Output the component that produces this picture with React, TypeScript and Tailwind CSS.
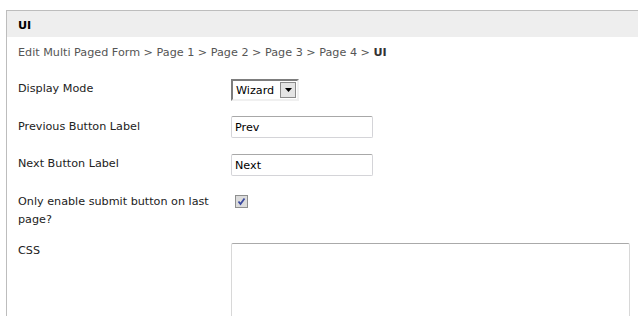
import React from 'react';

const font = { fontFamily: '"DejaVu Sans", Verdana, sans-serif' };

export default function App() {
  return (
    <div className="w-[638px] h-[316px] overflow-hidden bg-white pt-[10px] pl-[6px] text-[11.2px] leading-[18px] text-[#222]" style={font}>
      <div className="w-[640px] h-[400px] border-t border-l border-[#bdbdbd]">
        {/* header */}
        <div className="h-[26px] bg-[#eeeeee] pl-[11px] pt-[3px] flex items-center font-bold text-black">UI</div>

        <div className="pl-[11px]">
          {/* breadcrumb */}
          <div className="mt-[7px] text-[#555]">
            Edit Multi Paged Form &gt; Page 1 &gt; Page 2 &gt; Page 3 &gt; Page 4 &gt; <span className="font-bold text-[#333]">UI</span>
          </div>

          {/* Display Mode */}
          <div className="mt-[17px] flex items-start">
            <div className="w-[213px] pt-[1px]">Display Mode</div>
            <div className="w-[68px] h-[22px] flex items-center justify-between border-2 border-t-[#7d7d7d] border-l-[#7d7d7d] border-r-[#f0f0f0] border-b-[#f0f0f0] bg-white pl-[3px] pr-[1px] text-black">
              <span className="pt-[1px]">Wizard</span>
              <span className="w-[16px] h-[16px] flex items-center justify-center border border-[#8a8a8a] bg-[#e4e4e4]">
                <svg width="7" height="4" viewBox="0 0 7 4"><path d="M0 0h7L3.5 4z" fill="#000" /></svg>
              </span>
            </div>
          </div>

          {/* Previous */}
          <div className="mt-[15px] flex items-start">
            <div className="w-[213px] pt-[2px]">Previous Button Label</div>
            <div className="w-[142px] h-[22px] border border-[#d4d4d8] border-t-[#a8a8a8] rounded-[2px] px-[3px] pt-[1px] flex items-center text-black">Prev</div>
          </div>

          {/* Next */}
          <div className="mt-[16px] flex items-start">
            <div className="w-[213px] pt-[1px]">Next Button Label</div>
            <div className="w-[142px] h-[22px] border border-[#d4d4d8] border-t-[#a8a8a8] rounded-[2px] px-[3px] pt-[1px] flex items-center text-black">Next</div>
          </div>

          {/* Only enable submit */}
          <div className="mt-[16px] flex items-start">
            <div className="w-[213px] pr-[4px] pt-[1px]">Only enable submit button on last page?</div>
            <div className="ml-[4px] mt-[3px] w-[13px] h-[13px] border border-[#8e8f8f] bg-[#dcdcdc] flex items-center justify-center">
              <svg width="9" height="9" viewBox="0 0 9 9">
                <path d="M1.5 4.5L3.5 7L7.5 1.5" stroke="#3b4aa0" strokeWidth="1.8" fill="none" />
              </svg>
            </div>
          </div>

          {/* CSS */}
          <div className="mt-[12px] flex items-start">
            <div className="w-[213px] pt-[1px]">CSS</div>
            <div className="mt-[2px] w-[399px] h-[120px] border border-[#d8d8d8] border-t-[#aaaaaa] rounded-[2px]" />
          </div>
        </div>
      </div>
    </div>
  );
}
